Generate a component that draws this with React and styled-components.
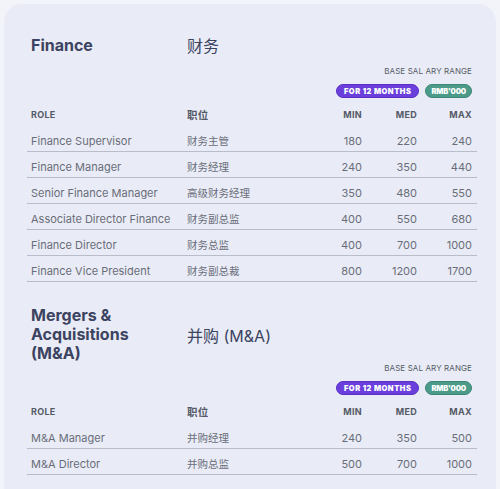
import styled, { createGlobalStyle } from "styled-components";

const GlobalStyle = createGlobalStyle`
  body {
    margin: 0;
    background: #f3f4fa;
    font-family: Inter, "Noto Sans CJK SC", sans-serif;
  }
`

const Card = styled.div`
  margin: 4px 4px 0;
  min-height: 520px;
  border-radius: 18px;
  background: #e9ecf6;
  padding: 29px 19px 0 23px;
`

const Section = styled.section`
  & + & {
    margin-top: 24px;
  }
`

const Header = styled.div`
  display: flex;
  align-items: center;
  padding-left: 4px;
  margin-bottom: ${(p) => p.$space}px;
`

const Title = styled.h2`
  margin: 0;
  width: 156px;
  box-sizing: border-box;
  padding-right: 24px;
  font-size: 16px;
  line-height: 19px;
  font-weight: 700;
  color: #3c4361;
`

const TitleCn = styled.div`
  font-family: Inter, "Noto Sans CJK SC", sans-serif;
  font-size: 16px;
  color: #3c4361;
`

const Range = styled.div`
  display: flex;
  flex-direction: column;
  align-items: flex-end;
  padding-right: 5px;
  gap: 7px;
`

const RangeLabel = styled.span`
  font-size: 8px;
  line-height: 11px;
  letter-spacing: 0.1px;
  color: #555a66;
  text-transform: uppercase;
`

const Badges = styled.div`
  display: flex;
  gap: 6px;
`

const Badge = styled.span`
  height: 14px;
  box-sizing: border-box;
  padding: 0 ${(p) => (p.$tight ? 5 : 7)}px;
  border-radius: 8px;
  display: flex;
  align-items: center;
  font-size: 7.5px;
  font-weight: 900;
  letter-spacing: ${(p) => (p.$tight ? "-0.2px" : "0.5px")};
  color: #fff;
  background: ${(p) => p.$bg};
  border: 1px solid ${(p) => p.$edge};
`

const Row = styled.div`
  display: grid;
  grid-template-columns: 156px 1fr 55px 55px 55px;
  align-items: center;
  box-sizing: border-box;
  height: ${(p) => (p.$head ? "24px" : "26px")};
  border-bottom: ${(p) => (p.$head ? "none" : "1px solid #b9bdc9")};
  margin-top: ${(p) => (p.$head ? "4px" : "0")};
  padding: ${(p) => (p.$head ? "0" : "4px")} 5px 0 4px;
`

const Cell = styled.span`
  font-size: ${(p) => (p.$head ? "9px" : "11px")};
  font-weight: ${(p) => (p.$head ? 700 : 400)};
  color: ${(p) => (p.$head ? "#555a66" : "#696d79")};
  letter-spacing: ${(p) => (p.$head ? "0.3px" : "0")};
  text-align: ${(p) => (p.$num ? "right" : "left")};
  white-space: nowrap;
`

const CnCell = styled(Cell)`
  font-family: "Noto Sans CJK SC", sans-serif;
  font-size: 10.5px;
`

const sections = [
  {
    title: "Finance",
    cn: "财务",
    space: 9,
    rows: [
      ["Finance Supervisor", "财务主管", 180, 220, 240],
      ["Finance Manager", "财务经理", 240, 350, 440],
      ["Senior Finance Manager", "高级财务经理", 350, 480, 550],
      ["Associate Director Finance", "财务副总监", 400, 550, 680],
      ["Finance Director", "财务总监", 400, 700, 1000],
      ["Finance Vice President", "财务副总裁", 800, 1200, 1700],
    ],
  },
  {
    title: "Mergers & Acquisitions (M&A)",
    cn: "并购 (M&A)",
    space: 0,
    rows: [
      ["M&A Manager", "并购经理", 240, 350, 500],
      ["M&A Director", "并购总监", 500, 700, 1000],
    ],
  },
]

const App = () => {
  return (
    <>
      <GlobalStyle />
      <Card>
        {sections.map((s) => (
          <Section key={s.title}>
            <Header $space={s.space}>
              <Title>{s.title}</Title>
              <TitleCn>{s.cn}</TitleCn>
            </Header>
            <Range>
              <RangeLabel>Base Sal ary Range</RangeLabel>
              <Badges>
                <Badge $bg="#6b3fdc" $edge="#5a30c4">FOR 12 MONTHS</Badge>
                <Badge $bg="#4b9b88" $edge="#3e8676" $tight>RMB'000</Badge>
              </Badges>
            </Range>
            <Row $head>
              <Cell $head>ROLE</Cell>
              <CnCell $head>职位</CnCell>
              <Cell $head $num>MIN</Cell>
              <Cell $head $num>MED</Cell>
              <Cell $head $num>MAX</Cell>
            </Row>
            {s.rows.map((r) => (
              <Row key={r[0]}>
                <Cell>{r[0]}</Cell>
                <CnCell>{r[1]}</CnCell>
                <Cell $num>{r[2]}</Cell>
                <Cell $num>{r[3]}</Cell>
                <Cell $num>{r[4]}</Cell>
              </Row>
            ))}
          </Section>
        ))}
      </Card>
    </>
  )
}

export default App;
